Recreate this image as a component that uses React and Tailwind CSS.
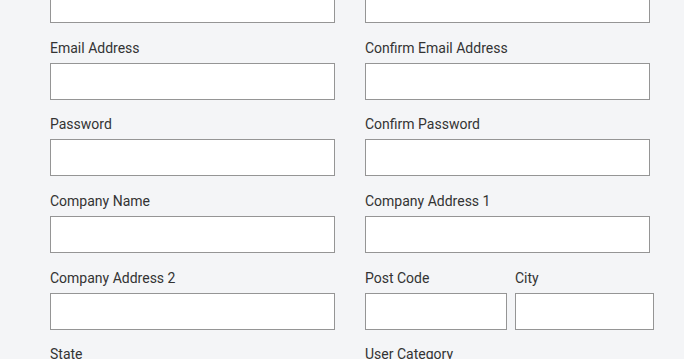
const Field = ({ label, className = '' }) => (
  <div className={`flex flex-col ${className}`}>
    <label className="h-5 pt-[1px] leading-5 text-[14px] text-[#333333] mb-[5px] whitespace-nowrap box-content">{label}</label>
    <input type="text" className="h-[37px] w-full bg-white border border-[#959595] outline-none" />
  </div>
)

export default function App() {
  return (
    <div className="min-h-screen bg-[#f4f5f7] overflow-hidden" style={{ fontFamily: 'Roboto, "Liberation Sans", sans-serif' }}>
      <div className="mt-[-40px] ml-[50px] w-[600px] grid grid-cols-[285px_285px] gap-x-[30px] gap-y-[13.7px]">
        <Field label="First Name" />
        <Field label="Last Name" />
        <Field label="Email Address" />
        <Field label="Confirm Email Address" />
        <Field label="Password" />
        <Field label="Confirm Password" />
        <Field label="Company Name" />
        <Field label="Company Address 1" />
        <Field label="Company Address 2" />
        <div className="flex gap-2 w-[289px]">
          <Field label="Post Code" className="w-[142px] shrink-0" />
          <Field label="City" className="w-[139px] shrink-0" />
        </div>
        <Field label="State" />
        <Field label="User Category" />
      </div>
    </div>
  )
}
